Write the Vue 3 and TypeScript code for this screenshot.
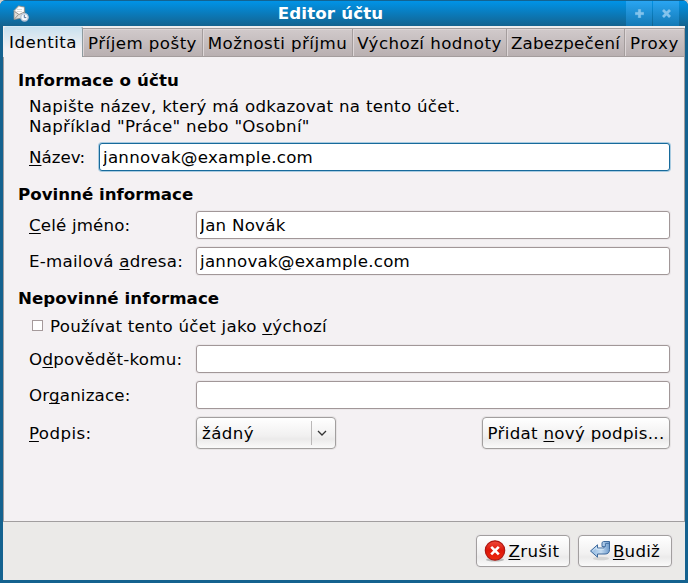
<script setup lang="ts">
import { ref } from 'vue'

interface Tab {
  label: string
  width: number
}

const tabs: Tab[] = [
  { label: 'Identita', width: 79 },
  { label: 'Příjem pošty', width: 120 },
  { label: 'Možnosti příjmu', width: 150 },
  { label: 'Výchozí hodnoty', width: 154 },
  { label: 'Zabezpečení', width: 118 },
  { label: 'Proxy', width: 60 },
]
const activeTab = ref(0)

const accountName = ref('jannovak@example.com')
const fullName = ref('Jan Novák')
const email = ref('jannovak@example.com')
const replyTo = ref('')
const organization = ref('')
const isDefault = ref(false)
</script>

<template>
  <div class="desktop">
    <div class="window">
      <header class="titlebar">
        <svg class="app-icon" width="17" height="17" viewBox="0 0 17 17">
          <path d="M1 5.500 5.500 .8 11.500 2 12 12.500 1 14.500Z" fill="#dedcd8" stroke="#8b8984" stroke-width=".8" />
          <path d="M2.500 5.500 6 1.800 10.700 2.800V8L6 9.500Z" fill="#fff" />
          <path d="M4 4.500h5M4 6.500h5" stroke="#d4d2cd" stroke-width=".8" />
          <path d="M1.500 6.500 6 9.500 11.500 7M1.500 14 5.500 9.500" fill="none" stroke="#96938e" />
          <circle cx="11.500" cy="12.300" r="3.700" fill="#f4f8fc" stroke="#b4c2d5" stroke-width="1.300" />
          <path d="M11.300 9.800v2.800h2" fill="none" stroke="#56769e" />
        </svg>
        <h1>Editor účtu</h1>
        <div class="controls">
          <button class="control" aria-label="Maximalizovat">
            <svg width="9" height="9" viewBox="0 0 9 9"><path d="M3 0h3v3h3v3H6v3H3V6H0V3h3Z" fill="#83c3ec" stroke="#3e9fd9" stroke-width=".5" /></svg>
          </button>
          <button class="control" aria-label="Zavřít">
            <svg width="9" height="9" viewBox="0 0 9 9"><path d="m1 1 7 7M8 1 1 8" stroke="#83c3ec" stroke-width="2.8" /></svg>
          </button>
        </div>
      </header>

      <nav class="tabs">
        <button
          v-for="(tab, i) in tabs"
          :key="tab.label"
          class="tab"
          :class="{ active: i === activeTab }"
          :style="{ width: tab.width + 'px' }"
          @click="activeTab = i"
        ><span>{{ tab.label }}</span></button>
      </nav>

      <main class="page">
        <h2 class="s-info">Informace o účtu</h2>
        <p class="hint">Napište název, který má odkazovat na tento účet.<br />Například "Práce" nebo "Osobní"</p>
        <div class="row name-row">
          <label for="name" class="s-name"><u>N</u>ázev:</label>
          <div class="field focused"><input id="name" v-model="accountName" type="text" /></div>
        </div>

        <h2>Povinné informace</h2>
        <div class="row">
          <label for="full" class="s-full"><u>C</u>elé jméno:</label>
          <div class="field"><input id="full" v-model="fullName" type="text" /></div>
        </div>
        <div class="row">
          <label for="email"><span>E-mailová <u>a</u>dresa:</span></label>
          <div class="field"><input id="email" v-model="email" type="text" /></div>
        </div>

        <h2 class="s-opt">Nepovinné informace</h2>
        <label class="check-row">
          <input v-model="isDefault" type="checkbox" />
          <span>Používat tento účet jako <u>v</u>ýchozí</span>
        </label>
        <div class="row">
          <label for="reply" class="s-reply">O<u>d</u>povědět-komu:</label>
          <div class="field"><input id="reply" v-model="replyTo" type="text" /></div>
        </div>
        <div class="row">
          <label for="org" class="s-org">Or<u>g</u>anizace:</label>
          <div class="field"><input id="org" v-model="organization" type="text" /></div>
        </div>
        <div class="row signature-row">
          <label class="s-sig"><u>P</u>odpis:</label>
          <button class="button combo">
            <span class="combo-text">žádný</span>
            <span class="combo-arrow">
              <svg width="10" height="7" viewBox="0 0 10 7"><path d="m1 1 4 4 4-4" fill="none" stroke="#333" stroke-width="1.3" /></svg>
            </span>
          </button>
          <button class="button add"><span>Přidat <u>n</u>ový podpis...</span></button>
        </div>
      </main>

      <footer class="actions">
        <button class="button action cancel">
          <svg width="22" height="22" viewBox="0 0 22 22">
            <defs>
              <linearGradient id="red" x1="0" y1="0" x2="0" y2="1">
                <stop offset="0" stop-color="#f04a3c" /><stop offset=".5" stop-color="#dd1608" /><stop offset="1" stop-color="#f02a10" />
              </linearGradient>
            </defs>
            <ellipse cx="11" cy="19.700" rx="9" ry="1.800" fill="#bbb" />
            <circle cx="11" cy="10.500" r="9.700" fill="url(#red)" stroke="#ae1712" stroke-width="1.200" />
            <path d="m7.200 6.800 7.600 7.600m0-7.600-7.600 7.600" stroke="#fff" stroke-width="2.600" />
          </svg>
          <span><u>Z</u>rušit</span>
        </button>
        <button class="button action ok">
          <svg width="22" height="22" viewBox="0 0 22 22">
            <defs>
              <linearGradient id="blue" x1="0" y1="0" x2="1" y2="0">
                <stop offset="0" stop-color="#8db5df" /><stop offset=".55" stop-color="#c4dbf1" /><stop offset="1" stop-color="#6e9bcc" />
              </linearGradient>
            </defs>
            <ellipse cx="12" cy="18.500" rx="8" ry="1.800" fill="#d4d4d4" />
            <path d="M1.500 11 8.500 4.800V8H15V6.500H13V2.500L14.500 1.500H20.500V9.500Q20.500 14 16 14H8.500V17.200Z" fill="url(#blue)" stroke="#3d699c" stroke-linejoin="round" />
            <path d="M13.500 6.500H16.500V3.500H20" fill="none" stroke="#4e79aa" />
            <path d="M3.300 11 7.600 7.200V9.200H15" fill="none" stroke="#e0edf9" stroke-width=".8" />
          </svg>
          <span><u>B</u>udiž</span>
        </button>
      </footer>
    </div>
  </div>
</template>

<style>
body {
  margin: 0;
  overflow: hidden;
}
</style>

<style scoped>
* {
  box-sizing: border-box;
}
.desktop {
  width: 688px;
  height: 583px;
  background: #d2d0cc;
  font: 16.67px/20px 'DejaVu Sans', sans-serif;
  letter-spacing: 0.25px;
  color: #000;
}
.window {
  display: flex;
  flex-direction: column;
  height: 583px;
  padding: 0 3px 3px;
  background: #14628f;
  border-radius: 6px 6px 0 0;
  overflow: hidden;
}
button,
input {
  font: inherit;
  letter-spacing: inherit;
  color: inherit;
  margin: 0;
  padding: 0;
  border: 0;
}
button,
label,
h1,
h2,
p {
  white-space: nowrap;
}
u {
  text-decoration-thickness: 1px;
  text-underline-offset: 2px;
  text-decoration-skip-ink: none;
}
.titlebar {
  flex: none;
  display: flex;
  align-items: center;
  height: 26px;
  margin: 0 -3px;
  padding-left: 13px;
  border-top: 1px solid #136391;
  background: linear-gradient(#0093e7, #14638f);
}
.app-icon {
  flex: none;
  margin-top: -1px;
}
h1 {
  flex: 1;
  margin: 0;
  padding-left: 5px;
  text-align: center;
  font-size: 16.67px;
  line-height: 24px;
  letter-spacing: 0.15px;
  color: #fff;
}
.controls {
  display: flex;
  align-self: stretch;
  gap: 1px;
  width: 62px;
}
.control {
  display: flex;
  align-items: center;
  justify-content: center;
  width: 26px;
  background: linear-gradient(#29a5f2, #1479b5);
}
.tabs {
  flex: none;
  display: flex;
  align-items: flex-end;
  height: 31px;
  padding-left: 1px;
  background: #f0eeee;
}
.tab {
  flex: none;
  display: flex;
  justify-content: center;
  height: 29px;
  padding-top: 5px;
  border: 1px solid #a49d9d;
  border-left: 0;
  background: linear-gradient(#d1cacb, #b9b0b1);
  box-shadow: inset 1px 1px #ddd6d7;
  letter-spacing: 0.45px;
}
.tab:nth-child(5) {
  letter-spacing: 0.23px;
}
.tab:nth-child(6) {
  letter-spacing: 0.65px;
}
.tab.active {
  height: 31px;
  padding-top: 6px;
  border-top: 1px solid #d6e9f5;
  border-bottom: 0;
  border-right-color: #8e9b9f;
  border-radius: 3px 3px 0 0;
  background: linear-gradient(#c8e1ef, #f4f1f3 22px);
  box-shadow: none;
}
.page {
  flex: none;
  height: 465px;
  padding: 14px 14px 0;
  border: 1px solid #a19e9f;
  border-top: 0;
  background: #f4f1f3;
}
h2 {
  height: 20px;
  margin: 0 0 6px;
  font-size: 16.67px;
  line-height: 20px;
  letter-spacing: 0;
}
h2.s-info {
  letter-spacing: 0.1px;
}
h2.s-opt {
  letter-spacing: 0.05px;
}
.hint {
  margin: 0 0 5px 11px;
  letter-spacing: 0.29px;
}
.row {
  display: grid;
  grid-template-columns: 166px 1fr;
  align-items: center;
  height: 30px;
  margin: 0 -1px 6px 11px;
}
.row > label {
  padding-top: 2px;
}
.name-row {
  grid-template-columns: 69px 1fr;
  margin-bottom: 13px;
}
.row + h2 {
  margin: 13px 0 5px;
}
.s-name {
  letter-spacing: 0;
}
.s-full,
.s-org {
  letter-spacing: 0.17px;
}
.s-sig {
  letter-spacing: 0.4px;
}
.field {
  height: 30px;
  padding: 1px;
  border-radius: 4px;
  background: #ebe7e9;
}
.field input {
  display: block;
  width: 100%;
  height: 28px;
  padding: 0 3px;
  border: 1px solid #a19798;
  border-radius: 3px;
  background: #fff;
  outline: none;
}
.field.focused {
  background: #a9cbe0;
}
.field.focused input {
  border-color: #176a9b;
}
.check-row {
  display: flex;
  align-items: center;
  gap: 7px;
  height: 24px;
  margin: 0 0 6px 14px;
}
.check-row input {
  appearance: none;
  width: 11px;
  height: 11px;
  margin-bottom: 1px;
  border: 1px solid #a59a9b;
  background: #fff;
}
.check-row span {
  padding-top: 1px;
}
.signature-row {
  display: flex;
  height: 34px;
  margin-right: 0;
}
.signature-row label {
  width: 167px;
}
.button {
  display: flex;
  align-items: center;
  justify-content: center;
  height: 32px;
  border: 1px solid #a29f9f;
  border-radius: 4px;
  background: linear-gradient(#fff, #f1f0f0 60%, #ebeaea 70%, #fafafa);
  box-shadow: 0 0 0 1px #e7e4e5;
}
.combo {
  width: 140px;
  padding-left: 5px;
  letter-spacing: 0.4px;
}
.combo-text {
  flex: 1;
  padding-top: 1px;
  text-align: left;
}
.combo-arrow {
  display: flex;
  align-items: center;
  justify-content: center;
  width: 24px;
  height: 24px;
  padding-right: 3px;
  border-left: 1px solid #bab8b8;
}
.add {
  width: 188px;
  margin-left: auto;
  letter-spacing: 0.3px;
}
.add span {
  padding-top: 1px;
}
.actions {
  flex: 1;
  display: flex;
  justify-content: flex-end;
  gap: 8px;
  padding: 13px 13px 0 0;
  background: #ebeae8;
}
.action {
  width: 94px;
  gap: 2px;
}
.action span {
  padding-top: 1px;
}
.cancel {
  padding-right: 2px;
  letter-spacing: 0.4px;
}
.ok {
  padding-right: 1px;
}
</style>
